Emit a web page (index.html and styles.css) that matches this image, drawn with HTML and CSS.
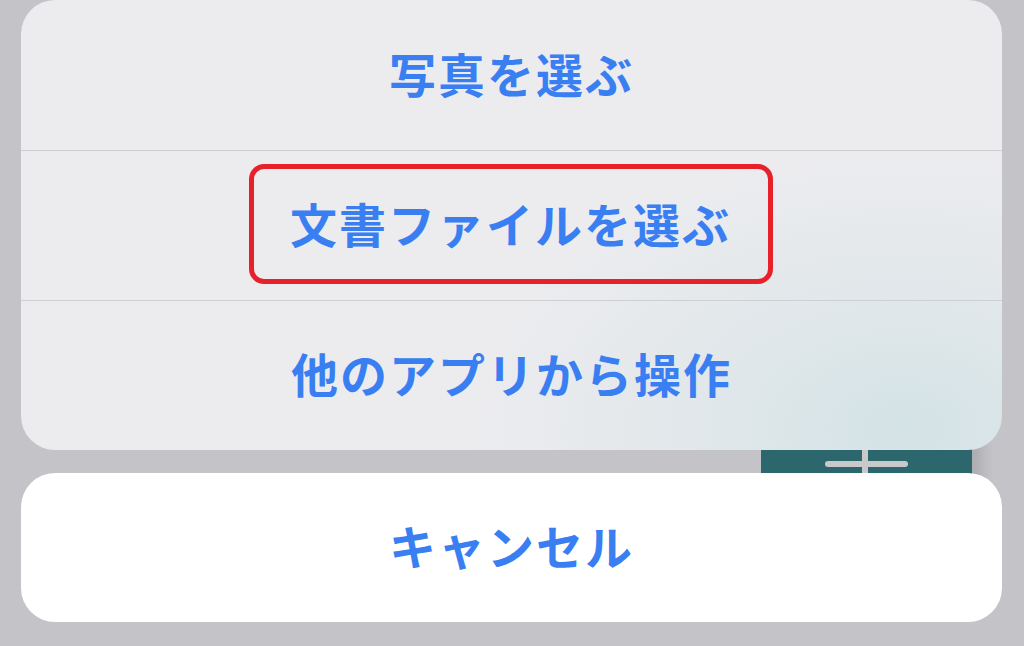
FILE: index.html
```html
<!DOCTYPE html>
<html lang="ja">
<head>
  <meta charset="UTF-8">
  <title>アクションシート</title>
  <meta name="viewport" content="width=device-width, initial-scale=1.0"/>
  <link rel="stylesheet" href="styles.css">
</head>
<body>
  <div class="behind">
    <span class="plus-h"></span>
    <span class="plus-v"></span>
  </div>

  <div class="sheet">
    <div class="group">
      <button class="option">写真を選ぶ</button>
      <button class="option"><span class="mark">文書ファイルを選ぶ</span></button>
      <button class="option">他のアプリから操作</button>
    </div>
    <button class="cancel">キャンセル</button>
  </div>
</body>
</html>
```

FILE: styles.css
```css
body { margin: 0; background: #c4c3c8; font-family: "Noto Sans CJK JP", "Noto Sans", sans-serif; height: 646px; overflow: hidden; position: relative; }

.behind { position: absolute; left: 761px; top: 430px; width: 211px; height: 60px; background: #2b676d; box-shadow: 10px 0 12px rgba(0,0,0,0.12); }
.plus-h { position: absolute; left: 64px; top: 31px; width: 83px; height: 6px; border-radius: 3px; background: #c9c9cb; }
.plus-v { position: absolute; left: 101px; top: 0; width: 6px; height: 60px; background: #c9c9cb; }

.sheet { position: relative; margin: 0 22px 0 21px; display: flex; flex-direction: column; gap: 23px; }

.group { background: radial-gradient(ellipse 440px 280px at 90% 95%, #d4e3e6 0%, #e3e8eb 55%, #ececef 100%), #ececef; border-radius: 34px; overflow: hidden; display: flex; flex-direction: column; }

.option, .cancel { font-family: inherit; border: none; background: transparent; color: #3a7ff1; font-size: 47px; font-weight: 700; letter-spacing: 2px; padding: 0 0 6px 0; cursor: pointer; display: flex; align-items: center; justify-content: center; }
.option { height: 150px; }
.option + .option { border-top: 1.5px solid #cfced3; }
.option:nth-child(2) { padding: 0 2px 0 0; }

.mark { display: flex; align-items: center; justify-content: center; width: 514px; height: 106px; border: 5px solid #e8202a; border-radius: 15px; margin-top: -3px; padding-bottom: 4px; box-sizing: content-box; }

.cancel { background: white; height: 149px; border-radius: 34px; }
```
